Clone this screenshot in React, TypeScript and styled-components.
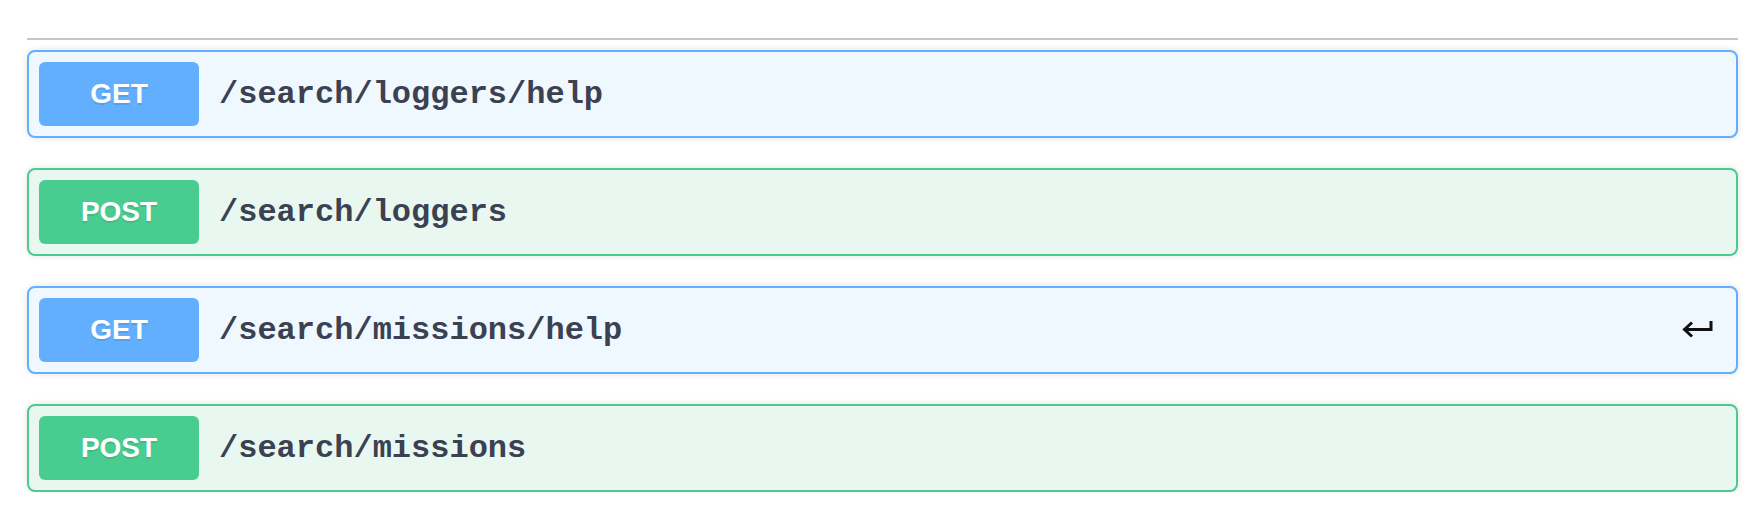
import React from "react";
import styled, { createGlobalStyle } from "styled-components";

const GlobalStyle = createGlobalStyle`
  html, body { margin: 0; padding: 0; background: #ffffff; }
  body { font-family: "Liberation Sans", Arial, sans-serif; }
`;

type Method = "get" | "post";

const palette: Record<Method, { border: string; bg: string }> = {
  get: { border: "#61affe", bg: "#eff7ff" },
  post: { border: "#49cc90", bg: "#e8f8f1" },
};

const Page = styled.div`
  padding: 38px 12px 0 27px;
`;

const TagHeader = styled.div`
  border-bottom: 2px solid #c4c6cb;
  margin-bottom: 10px;
`;

const List = styled.div`
  display: flex;
  flex-direction: column;
  gap: 30px;
`;

const Block = styled.div<{ $m: Method }>`
  border: 2px solid ${(p) => palette[p.$m].border};
  background: ${(p) => palette[p.$m].bg};
  border-radius: 8px;
  box-shadow: 0 0 6px rgba(0, 0, 0, 0.12);
`;

const Summary = styled.div`
  display: flex;
  align-items: center;
  padding: 10px;
  height: 64px;
`;

const MethodBadge = styled.span<{ $m: Method }>`
  display: flex;
  align-items: center;
  justify-content: center;
  width: 160px;
  height: 64px;
  border-radius: 6px;
  background: ${(p) => palette[p.$m].border};
  color: #ffffff;
  font-family: "Liberation Sans", Arial, sans-serif;
  font-weight: 700;
  font-size: 28px;
  text-shadow: 0 2px 0 rgba(0, 0, 0, 0.1);
`;

const Path = styled.span`
  padding: 0 20px;
  font-family: "Liberation Mono", "Courier New", monospace;
  font-weight: 700;
  font-size: 32px;
  color: #3b4151;
`;

const ReturnIcon = styled.svg`
  margin-left: auto;
  margin-right: 12px;
  flex: none;
`;

const ops: { m: Method; path: string; arrow?: boolean }[] = [
  { m: "get", path: "/search/loggers/help" },
  { m: "post", path: "/search/loggers" },
  { m: "get", path: "/search/missions/help", arrow: true },
  { m: "post", path: "/search/missions" },
];

export default function App() {
  return (
    <>
      <GlobalStyle />
      <Page>
        <TagHeader />
        <List>
          {ops.map((o) => (
            <Block key={o.path} $m={o.m}>
              <Summary>
                <MethodBadge $m={o.m}>{o.m.toUpperCase()}</MethodBadge>
                <Path>{o.path}</Path>
                {o.arrow && (
                  <ReturnIcon width="32" height="20" viewBox="0 0 32 20">
                    <path
                      d="M29 1 V9.5 H3 M10 2.5 L2.5 9.5 L10 16.5"
                      fill="none"
                      stroke="#111"
                      strokeWidth="3"
                      strokeLinecap="butt"
                      strokeLinejoin="miter"
                    />
                  </ReturnIcon>
                )}
              </Summary>
            </Block>
          ))}
        </List>
      </Page>
    </>
  );
}
